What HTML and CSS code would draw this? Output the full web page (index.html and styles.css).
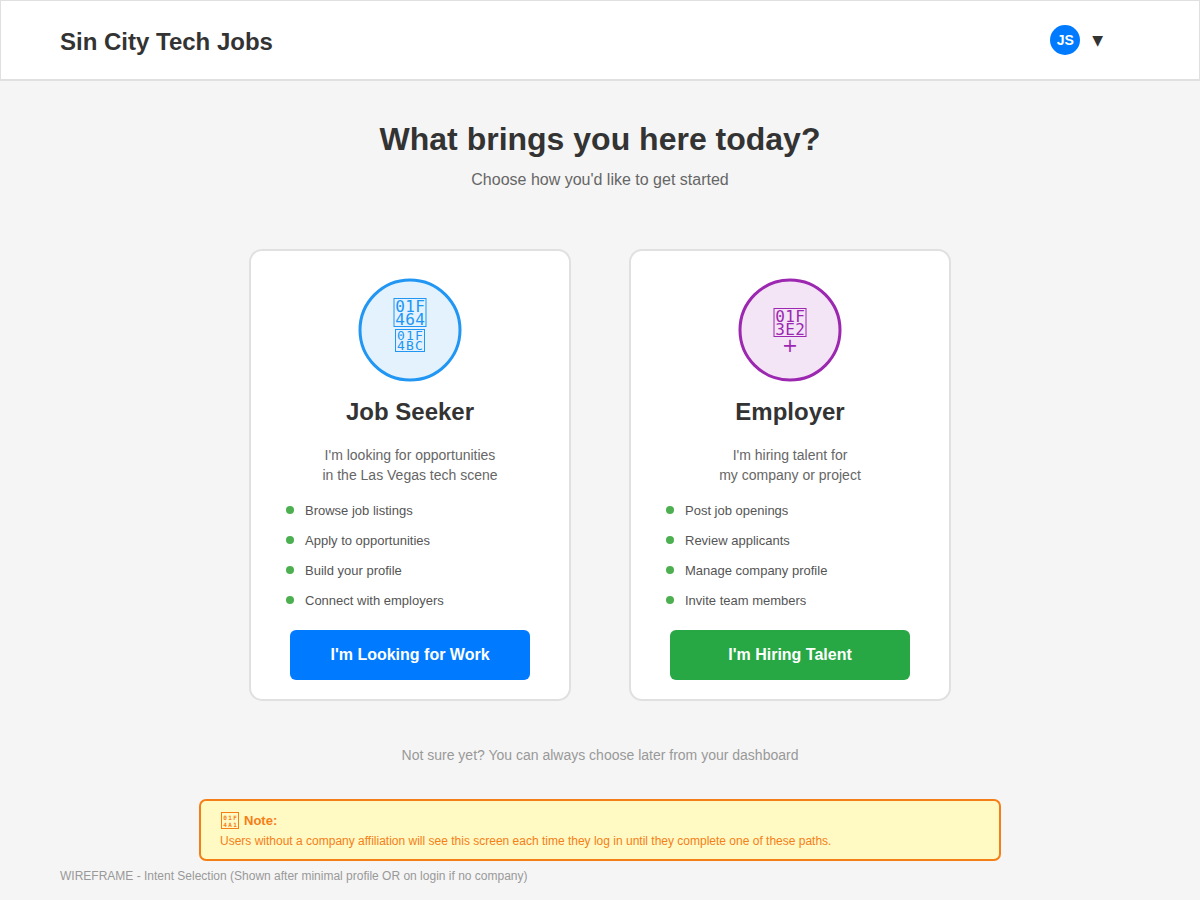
FILE: index.html
```html
<!DOCTYPE html>
<html lang="en">
<head>
<meta charset="utf-8">
<meta name="viewport" content="width=device-width, initial-scale=1">
<title>Sin City Tech Jobs</title>
<link rel="stylesheet" href="styles.css">
</head>
<body>
<header class="topbar">
  <div class="brand">Sin City Tech Jobs</div>
  <button class="account" type="button" aria-label="Account menu">
    <span class="avatar">JS</span>
    <span class="caret">▼</span>
  </button>
</header>
<main class="content">
  <h1 class="title">What brings you here today?</h1>
  <p class="subtitle">Choose how you'd like to get started</p>
  <div class="cards">
    <section class="card">
      <svg class="badge seeker" viewBox="0 0 104 104" aria-hidden="true">
        <circle cx="52" cy="52" r="50"/>
        <rect class="box" x="36" y="20.5" width="32" height="28"/>
        <text class="code-large" x="42 52 62" y="34">01F</text>
        <text class="code-large" x="42 52 62" y="47">464</text>
        <rect class="box" x="37.5" y="51.5" width="29" height="22"/>
        <text class="code-small" x="43 52 61" y="62">01F</text>
        <text class="code-small" x="43 52 61" y="72">4BC</text>
      </svg>
      <h2 class="card-title">Job Seeker</h2>
      <p class="card-text">I'm looking for opportunities<br>in the Las Vegas tech scene</p>
      <ul class="features">
        <li>Browse job listings</li>
        <li>Apply to opportunities</li>
        <li>Build your profile</li>
        <li>Connect with employers</li>
      </ul>
      <button class="action blue" type="button">I'm Looking for Work</button>
    </section>
    <section class="card">
      <svg class="badge employer" viewBox="0 0 104 104" aria-hidden="true">
        <circle cx="52" cy="52" r="50"/>
        <rect class="box" x="36" y="30.5" width="32" height="28"/>
        <text class="code-large" x="42 52 62" y="44">01F</text>
        <text class="code-large" x="42 52 62" y="57">3E2</text>
        <text class="plus" x="52" y="74">+</text>
      </svg>
      <h2 class="card-title">Employer</h2>
      <p class="card-text">I'm hiring talent for<br>my company or project</p>
      <ul class="features">
        <li>Post job openings</li>
        <li>Review applicants</li>
        <li>Manage company profile</li>
        <li>Invite team members</li>
      </ul>
      <button class="action green" type="button">I'm Hiring Talent</button>
    </section>
  </div>
  <p class="later">Not sure yet? You can always choose later from your dashboard</p>
  <aside class="note">
    <p class="note-title">
      <svg class="note-icon" viewBox="0 0 20 20" aria-hidden="true">
        <rect x="1.5" y="1.5" width="17" height="16"/>
        <text x="5 10 15" y="9">01F</text>
        <text x="5 10 15" y="16">4A1</text>
      </svg>
      Note:
    </p>
    <p class="note-text">Users without a company affiliation will see this screen each time they log in until they complete one of these paths.</p>
  </aside>
</main>
<footer class="caption">WIREFRAME - Intent Selection (Shown after minimal profile OR on login if no company)</footer>
</body>
</html>
```
FILE: styles.css
```css
* {
  box-sizing: border-box;
}

body {
  margin: 0;
  background: #f5f5f5;
  color: #333;
  font-family: "Liberation Sans", Arial, sans-serif;
}

h1, h2, p, ul {
  margin: 0;
  padding: 0;
}

button {
  border: 0;
  font-family: inherit;
  cursor: pointer;
}

.topbar {
  display: flex;
  align-items: center;
  justify-content: space-between;
  padding: 22px 96px 22px 59px;
  border: 1px solid #e0e0e0;
  border-bottom-width: 2px;
  background: #fff;
}

.brand {
  padding-top: 4px;
  font-size: 24px;
  font-weight: bold;
  line-height: 30px;
}

.account {
  display: flex;
  align-items: center;
  gap: 12px;
  padding: 0;
  background: none;
  color: #333;
}

.avatar {
  width: 30px;
  height: 30px;
  border-radius: 50%;
  background: #007bff;
  color: #fff;
  font-size: 14px;
  font-weight: bold;
  line-height: 30px;
  text-align: center;
}

.caret {
  font-family: "DejaVu Sans", sans-serif;
  font-size: 14px;
  line-height: 30px;
}

.content {
  display: flex;
  flex-direction: column;
  align-items: center;
  padding-top: 38px;
}

.title {
  font-size: 32px;
  line-height: 40px;
}

.subtitle {
  margin-top: 11px;
  color: #666;
  font-size: 16px;
  line-height: 20px;
}

.cards {
  display: flex;
  flex-wrap: wrap;
  justify-content: center;
  gap: 58px;
  margin-top: 59px;
}

.card {
  display: flex;
  flex-direction: column;
  align-items: center;
  width: 322px;
  padding: 27px 35px 19px;
  border: 2px solid #e0e0e0;
  border-radius: 13px;
  background: #fff;
}

.badge {
  width: 104px;
  height: 104px;
}

.badge circle {
  stroke-width: 3px;
}

.badge .box {
  fill: none;
  stroke-width: 1px;
}

.badge text {
  stroke: none;
  font-family: "DejaVu Sans Mono", monospace;
  text-anchor: middle;
}

.seeker {
  fill: #e3f2fd;
  stroke: #2196f3;
}

.seeker text {
  fill: #2196f3;
}

.employer {
  fill: #f3e5f5;
  stroke: #9c27b0;
}

.employer text {
  fill: #9c27b0;
}

.code-large {
  font-size: 16px;
}

.code-small {
  font-size: 13px;
}

.badge .plus {
  font-family: "DejaVu Sans", sans-serif;
  font-size: 19px;
}

.card-title {
  margin-top: 15px;
  font-size: 24px;
  line-height: 30px;
}

.card-text {
  margin-top: 18px;
  color: #666;
  font-size: 14px;
  line-height: 20px;
  text-align: center;
}

.features {
  width: 100%;
  margin-top: 11px;
  list-style: none;
}

.features li {
  display: flex;
  align-items: center;
  gap: 11px;
  color: #555;
  font-size: 13px;
  line-height: 30px;
}

.features li::before {
  width: 8px;
  height: 8px;
  margin-bottom: 2px;
  border-radius: 50%;
  background: #4caf50;
  content: "";
}

.action {
  width: 240px;
  margin-top: 14px;
  padding: 15px 0;
  border-radius: 6px;
  color: #fff;
  font-size: 16px;
  font-weight: bold;
  line-height: 20px;
}

.blue {
  background: #007bff;
}

.green {
  background: #28a745;
}

.later {
  margin-top: 44px;
  color: #999;
  font-size: 14px;
  line-height: 20px;
}

.note {
  width: 100%;
  max-width: 802px;
  margin-top: 34px;
  padding: 10px 19px 8px;
  border: 2px solid #f57f17;
  border-radius: 7px;
  background: #fff9c4;
  color: #f57f17;
}

.note-title {
  display: flex;
  align-items: center;
  gap: 4px;
  font-size: 13px;
  font-weight: bold;
  line-height: 20px;
}

.note-icon {
  width: 20px;
  height: 20px;
}

.note-icon rect {
  fill: none;
  stroke: #f57f17;
  stroke-width: 1px;
}

.note-icon text {
  fill: #f57f17;
  font-family: "DejaVu Sans Mono", monospace;
  font-size: 6px;
  text-anchor: middle;
}

.note-text {
  font-size: 12px;
  line-height: 20px;
}

.caption {
  padding: 5px 60px;
  color: #999;
  font-size: 12px;
  line-height: 20px;
}
```
